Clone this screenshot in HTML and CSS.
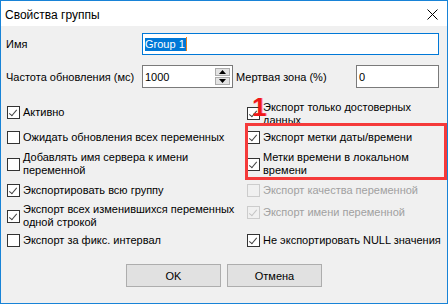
FILE: index.html
```html
<!DOCTYPE html>
<html lang="ru">
<head>
<meta charset="utf-8">
<title>Свойства группы</title>
<link rel="stylesheet" href="styles.css">
</head>
<body>
<div class="window">
  <div class="titlebar">
    <span class="title">Свойства группы</span>
    <svg class="close" width="11" height="11" viewBox="0 0 11 11"><path d="M0.5 0.5 L10.5 10.5 M10.5 0.5 L0.5 10.5" stroke="#000" stroke-width="1" fill="none"/></svg>
  </div>
  <div class="content">
    <div class="row row-name">
      <span class="label label-wide">Имя</span>
      <div class="input input-focus input-name"><span class="sel">Group 1</span><span class="caret"></span></div>
    </div>
    <div class="row row-rate">
      <span class="label label-wide">Частота обновления (мс)</span>
      <div class="input input-rate">
        <span class="val">1000</span>
        <div class="spin">
          <div class="spin-btn"><svg width="7" height="4" viewBox="0 0 7 4"><path d="M3.5 0 L7 4 L0 4 Z" fill="#000"/></svg></div>
          <div class="spin-btn"><svg width="7" height="4" viewBox="0 0 7 4"><path d="M0 0 L7 0 L3.5 4 Z" fill="#000"/></svg></div>
        </div>
      </div>
      <span class="label label-dead">Мертвая зона (%)</span>
      <div class="input input-dead"><span class="val">0</span></div>
    </div>
    <div class="checks">
      <label class="chk r1 c1"><span class="box on"></span><span class="txt">Активно</span></label>
      <label class="chk r1 c2"><span class="box on"></span><span class="txt">Экспорт только достоверных<br>данных</span></label>
      <label class="chk r2 c1"><span class="box"></span><span class="txt">Ожидать обновления всех переменных</span></label>
      <label class="chk r2 c2"><span class="box on"></span><span class="txt">Экспорт метки даты/времени</span></label>
      <label class="chk r3 c1"><span class="box"></span><span class="txt">Добавлять имя сервера к имени<br>переменной</span></label>
      <label class="chk r3 c2"><span class="box on"></span><span class="txt">Метки времени в локальном<br>времени</span></label>
      <label class="chk r4 c1"><span class="box on"></span><span class="txt">Экспортировать всю группу</span></label>
      <label class="chk r4 c2 disabled"><span class="box"></span><span class="txt">Экспорт качества переменной</span></label>
      <label class="chk r5 c1"><span class="box on"></span><span class="txt">Экспорт всех изменившихся переменных<br>одной строкой</span></label>
      <label class="chk r5 c2 disabled up"><span class="box on"></span><span class="txt">Экспорт имени переменной</span></label>
      <label class="chk r6 c1"><span class="box"></span><span class="txt">Экспорт за фикс. интервал</span></label>
      <label class="chk r6 c2"><span class="box on"></span><span class="txt">Не экспортировать NULL значения</span></label>
    </div>
    <div class="buttons">
      <button class="btn">OK</button>
      <button class="btn">Отмена</button>
    </div>
  </div>
  <div class="mark-box"></div>
  <div class="mark-num">1</div>
</div>
</body>
</html>
```

FILE: styles.css
```css
html, body {
  margin: 0;
  padding: 0;
  background: #f0f0f0;
}

.window {
  position: relative;
  width: 448px;
  height: 304px;
  box-sizing: border-box;
  border: 1px solid #1883d7;
  background: #f0f0f0;
  display: flex;
  flex-direction: column;
  font-family: "Liberation Sans", Arial, sans-serif;
  font-size: 11px;
  color: #000;
  overflow: hidden;
}

.titlebar {
  height: 25px;
  background: #fff;
  display: flex;
  align-items: center;
  justify-content: space-between;
  padding: 0 9px 0 4px;
  flex: none;
}

.title {
  font-size: 12px;
  margin-top: 3px;
}

.close {
  display: block;
  margin-top: 2px;
}

.content {
  display: flex;
  flex-direction: column;
  padding: 7px 0 0 5px;
}

.row {
  display: flex;
  align-items: center;
}

.label-wide {
  width: 136px;
  flex: none;
}

.input {
  box-sizing: border-box;
  background: #fff;
  border: 1px solid #7a7a7a;
  display: flex;
  align-items: center;
  padding-left: 2px;
}

.input-focus {
  border-color: #0078d7;
}

.input-name {
  width: 297px;
  height: 22px;
}

.sel {
  background: #0078d7;
  color: #fff;
  line-height: 13px;
  padding: 0 1px 0 0;
}

.caret {
  width: 1px;
  height: 14px;
  background: #e8801e;
}

.row-rate {
  margin-top: 10px;
}

.input-rate {
  width: 91px;
  height: 23px;
  justify-content: space-between;
  padding-right: 2px;
}

.spin {
  display: flex;
  flex-direction: column;
  gap: 1px;
}

.spin-btn {
  width: 15px;
  height: 8px;
  box-sizing: border-box;
  background: #e3e3e3;
  border: 1px solid #acacac;
  display: flex;
  align-items: center;
  justify-content: center;
}

.spin-btn svg {
  display: block;
}

.label-dead {
  margin-left: 3px;
  width: 120px;
  flex: none;
}

.input-dead {
  width: 83px;
  height: 23px;
}

.checks {
  margin-top: 12px;
  display: grid;
  grid-template-columns: 240px 1fr;
  grid-template-rows: 24px 26px 28px 25px 26px 23px;
  padding-left: 1px;
}

.chk {
  display: flex;
  align-items: center;
  gap: 3px;
  white-space: nowrap;
  line-height: 13px;
}

.c1 { grid-column: 1; }
.c2 { grid-column: 2; }
.r1 { grid-row: 1; }
.r2 { grid-row: 2; }
.r3 { grid-row: 3; }
.r4 { grid-row: 4; }
.r5 { grid-row: 5; }
.r6 { grid-row: 6; }

.r1.c2 { margin-top: 3px; }
.up { margin-bottom: 7px; }

.box {
  flex: none;
  width: 13px;
  height: 13px;
  box-sizing: border-box;
  border: 1px solid #333;
  background: #fff;
  position: relative;
}

.box.on::after {
  content: "";
  position: absolute;
  left: 3px;
  top: 1px;
  width: 3px;
  height: 7px;
  border-right: 1.2px solid #444;
  border-bottom: 1.2px solid #444;
  transform: rotate(40deg);
}

.disabled {
  color: #a0a0a0;
}

.disabled .box {
  border-color: #cccccc;
  background: #f0f0f0;
}

.disabled .box.on::after {
  border-color: #c4c4c4;
}

.buttons {
  margin-top: 12px;
  display: flex;
  justify-content: center;
  gap: 6px;
  padding-right: 5px;
}

.btn {
  width: 95px;
  height: 23px;
  box-sizing: border-box;
  background: #e1e1e1;
  border: 1px solid #adadad;
  font-family: "Liberation Sans", Arial, sans-serif;
  font-size: 11px;
  color: #000;
  padding: 0;
}

.mark-box {
  position: absolute;
  left: 244px;
  top: 122px;
  width: 202px;
  height: 57px;
  box-sizing: border-box;
  border: 3px solid #f53a3a;
}

.mark-num {
  position: absolute;
  left: 251px;
  top: 93px;
  font-family: "Liberation Sans", Arial, sans-serif;
  font-weight: bold;
  font-size: 26px;
  line-height: 26px;
  color: #f01818;
  text-shadow: 1px 0 0 #ff9aa8;
}
```
